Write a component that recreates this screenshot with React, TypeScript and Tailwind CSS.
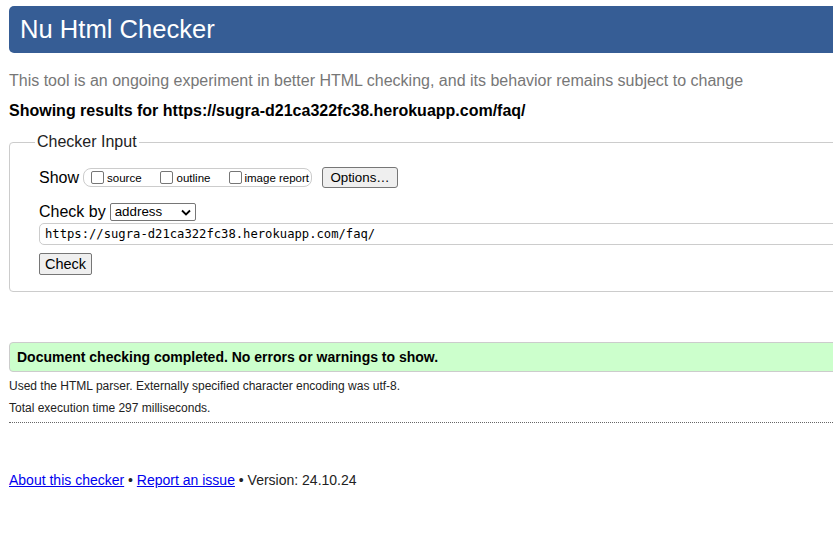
import React from "react";

function Box() {
  return (
    <span className="inline-block w-[13px] h-[13px] border border-[#767676] rounded-[2px] bg-white align-middle" />
  );
}

export default function App() {
  return (
    <div className="w-[833px] h-[546px] overflow-hidden bg-white text-black" style={{ fontFamily: '"Liberation Sans", Arial, sans-serif' }}>
      <div className="w-[900px] pl-[9px] pt-[6px]">
        <h1 className="h-[47px] bg-[#365d95] rounded-[5px] text-white text-[25.6px] leading-[47px] pl-[11px]">
          Nu Html Checker
        </h1>
        <p className="mt-[19px] text-[16px] leading-[18px] text-[#777]">
          This tool is an ongoing experiment in better HTML checking, and its behavior remains subject to change
        </p>
        <p className="mt-[12px] text-[16px] leading-[18px] font-bold">
          Showing results for https://sugra-d21ca322fc38.herokuapp.com/faq/
        </p>
        <fieldset className="mt-[13px] border border-[#ccc] rounded-[4px] pl-[25px] pb-[16px]">
          <legend className="px-[2px] text-[16px] leading-[18px] text-[#222]">Checker Input</legend>
          <div className="pl-[4px] pt-[16px]">
            <div className="flex items-center h-[21px]">
              <span className="text-[16px] leading-[18px]">Show</span>
              <div className="ml-[4px] h-[19px] w-[229px] border border-[#ccc] rounded-[8px] flex items-center text-[11.5px]">
                <span className="ml-[7px] flex items-center"><Box /><span className="ml-[3px] mt-[2px]">source</span></span>
                <span className="ml-[18px] flex items-center"><Box /><span className="ml-[4px] mt-[2px]">outline</span></span>
                <span className="ml-[19px] flex items-center"><Box /><span className="ml-[2px] mt-[2px]">image report</span></span>
              </div>
              <button className="ml-[10px] h-[21px] w-[76px] border border-[#767676] rounded-[3px] bg-[#efefef] text-[13.33px] leading-[19px]">
                Options…
              </button>
            </div>
            <div className="flex items-center mt-[15px] h-[18px]">
              <span className="text-[16px] leading-[18px]">Check by</span>
              <div className="ml-[4px] h-[18px] w-[86px] border border-[#767676] rounded-[2px] flex items-center justify-between px-[4px] text-[13.33px]">
                <span>address</span>
                <svg width="10" height="7" viewBox="0 0 10 7"><path d="M1 1.5 L5 5.5 L9 1.5" fill="none" stroke="#000" strokeWidth="1.8" /></svg>
              </div>
            </div>
            <div className="mt-[2px] h-[22px] border border-[#ccc] rounded-[5px] flex items-center pl-[5px] text-[12.2px]" style={{ fontFamily: '"DejaVu Sans Mono", "Liberation Mono", monospace' }}>
              https://sugra-d21ca322fc38.herokuapp.com/faq/
            </div>
            <button className="mt-[8px] h-[22px] w-[53px] border border-[#767676] rounded-[2px] bg-[#efefef] text-[14.5px] leading-[20px] block">
              Check
            </button>
          </div>
        </fieldset>
        <div className="mt-[50px] h-[30px] border border-[#ccc] rounded-l-[4px] bg-[#ccffcc] flex items-center pl-[7px] text-[14px] font-bold">
          Document checking completed. No errors or warnings to show.
        </div>
        <p className="mt-[7px] text-[12px] leading-[14px] text-[#222]">
          Used the HTML parser. Externally specified character encoding was utf-8.
        </p>
        <p className="mt-[8px] text-[12px] leading-[14px] text-[#222]">
          Total execution time 297 milliseconds.
        </p>
        <div className="mt-[7px] w-[824px] border-t border-dotted border-[#666]" />
        <p className="mt-[49px] text-[14px] leading-[16px] text-[#222]">
          <a className="text-[#0000ee] underline" href="#">About this checker</a> •{" "}
          <a className="text-[#0000ee] underline" href="#">Report an issue</a> • Version: 24.10.24
        </p>
      </div>
    </div>
  );
}
